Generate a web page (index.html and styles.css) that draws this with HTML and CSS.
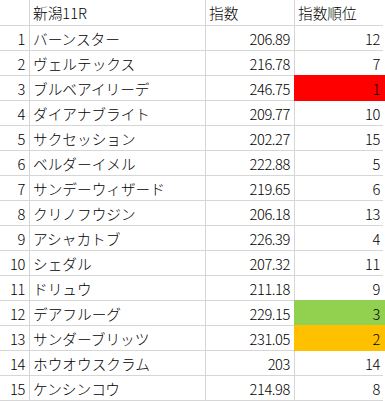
FILE: index.html
```html
<!DOCTYPE html>
<html lang="ja">
<head>
<meta charset="utf-8">
<link rel="stylesheet" href="styles.css">
</head>
<body>
<div class="sheet">
  <div class="c num"></div><div class="c">新潟11R</div><div class="c">指数</div><div class="c">指数順位</div>
  <div class="c num">1</div><div class="c">バーンスター</div><div class="c num">206.89</div><div class="c num">12</div>
  <div class="c num">2</div><div class="c">ヴェルテックス</div><div class="c num">216.78</div><div class="c num">7</div>
  <div class="c num">3</div><div class="c">ブルベアイリーデ</div><div class="c num">246.75</div><div class="c num fill red">1</div>
  <div class="c num">4</div><div class="c">ダイアナブライト</div><div class="c num">209.77</div><div class="c num">10</div>
  <div class="c num">5</div><div class="c">サクセッション</div><div class="c num">202.27</div><div class="c num">15</div>
  <div class="c num">6</div><div class="c">ベルダーイメル</div><div class="c num">222.88</div><div class="c num">5</div>
  <div class="c num">7</div><div class="c">サンデーウィザード</div><div class="c num">219.65</div><div class="c num">6</div>
  <div class="c num">8</div><div class="c">クリノフウジン</div><div class="c num">206.18</div><div class="c num">13</div>
  <div class="c num">9</div><div class="c">アシャカトブ</div><div class="c num">226.39</div><div class="c num">4</div>
  <div class="c num">10</div><div class="c">シェダル</div><div class="c num">207.32</div><div class="c num">11</div>
  <div class="c num">11</div><div class="c">ドリュウ</div><div class="c num">211.18</div><div class="c num">9</div>
  <div class="c num">12</div><div class="c">デアフルーグ</div><div class="c num">229.15</div><div class="c num fill green">3</div>
  <div class="c num">13</div><div class="c">サンダーブリッツ</div><div class="c num">231.05</div><div class="c num fill orange">2</div>
  <div class="c num">14</div><div class="c">ホウオウスクラム</div><div class="c num">203</div><div class="c num">14</div>
  <div class="c num">15</div><div class="c">ケンシンコウ</div><div class="c num">214.98</div><div class="c num">8</div>
</div>
</body>
</html>
```
FILE: styles.css
```css
html, body {
  margin: 0;
  padding: 0;
  background: #ffffff;
}
.sheet {
  display: grid;
  grid-template-columns: 29px 175px 88px 89px;
  grid-template-rows: 25px repeat(15, 24px);
  gap: 1px;
  background: #d6d6d6;
  padding: 0 1px 1px 0;
  width: 382px;
  font-family: "Noto Sans CJK JP", "Noto Sans", sans-serif;
  font-weight: 300;
  font-size: 14.67px;
  color: #000;
}
.c {
  background: #ffffff;
  padding: 1px 3px 0 3px;
  line-height: 24px;
  white-space: nowrap;
}
.num {
  text-align: right;
  padding-right: 4px;
  letter-spacing: -0.4px;
}
.fill {
  position: relative;
  z-index: 1;
}
.red {
  background: #ff0000;
  box-shadow: 0 0 0 1px #ff0000;
}
.green {
  background: #92d050;
  box-shadow: 0 0 0 1px #92d050;
}
.orange {
  background: #ffc000;
  box-shadow: 0 0 0 1px #ffc000;
}
```
